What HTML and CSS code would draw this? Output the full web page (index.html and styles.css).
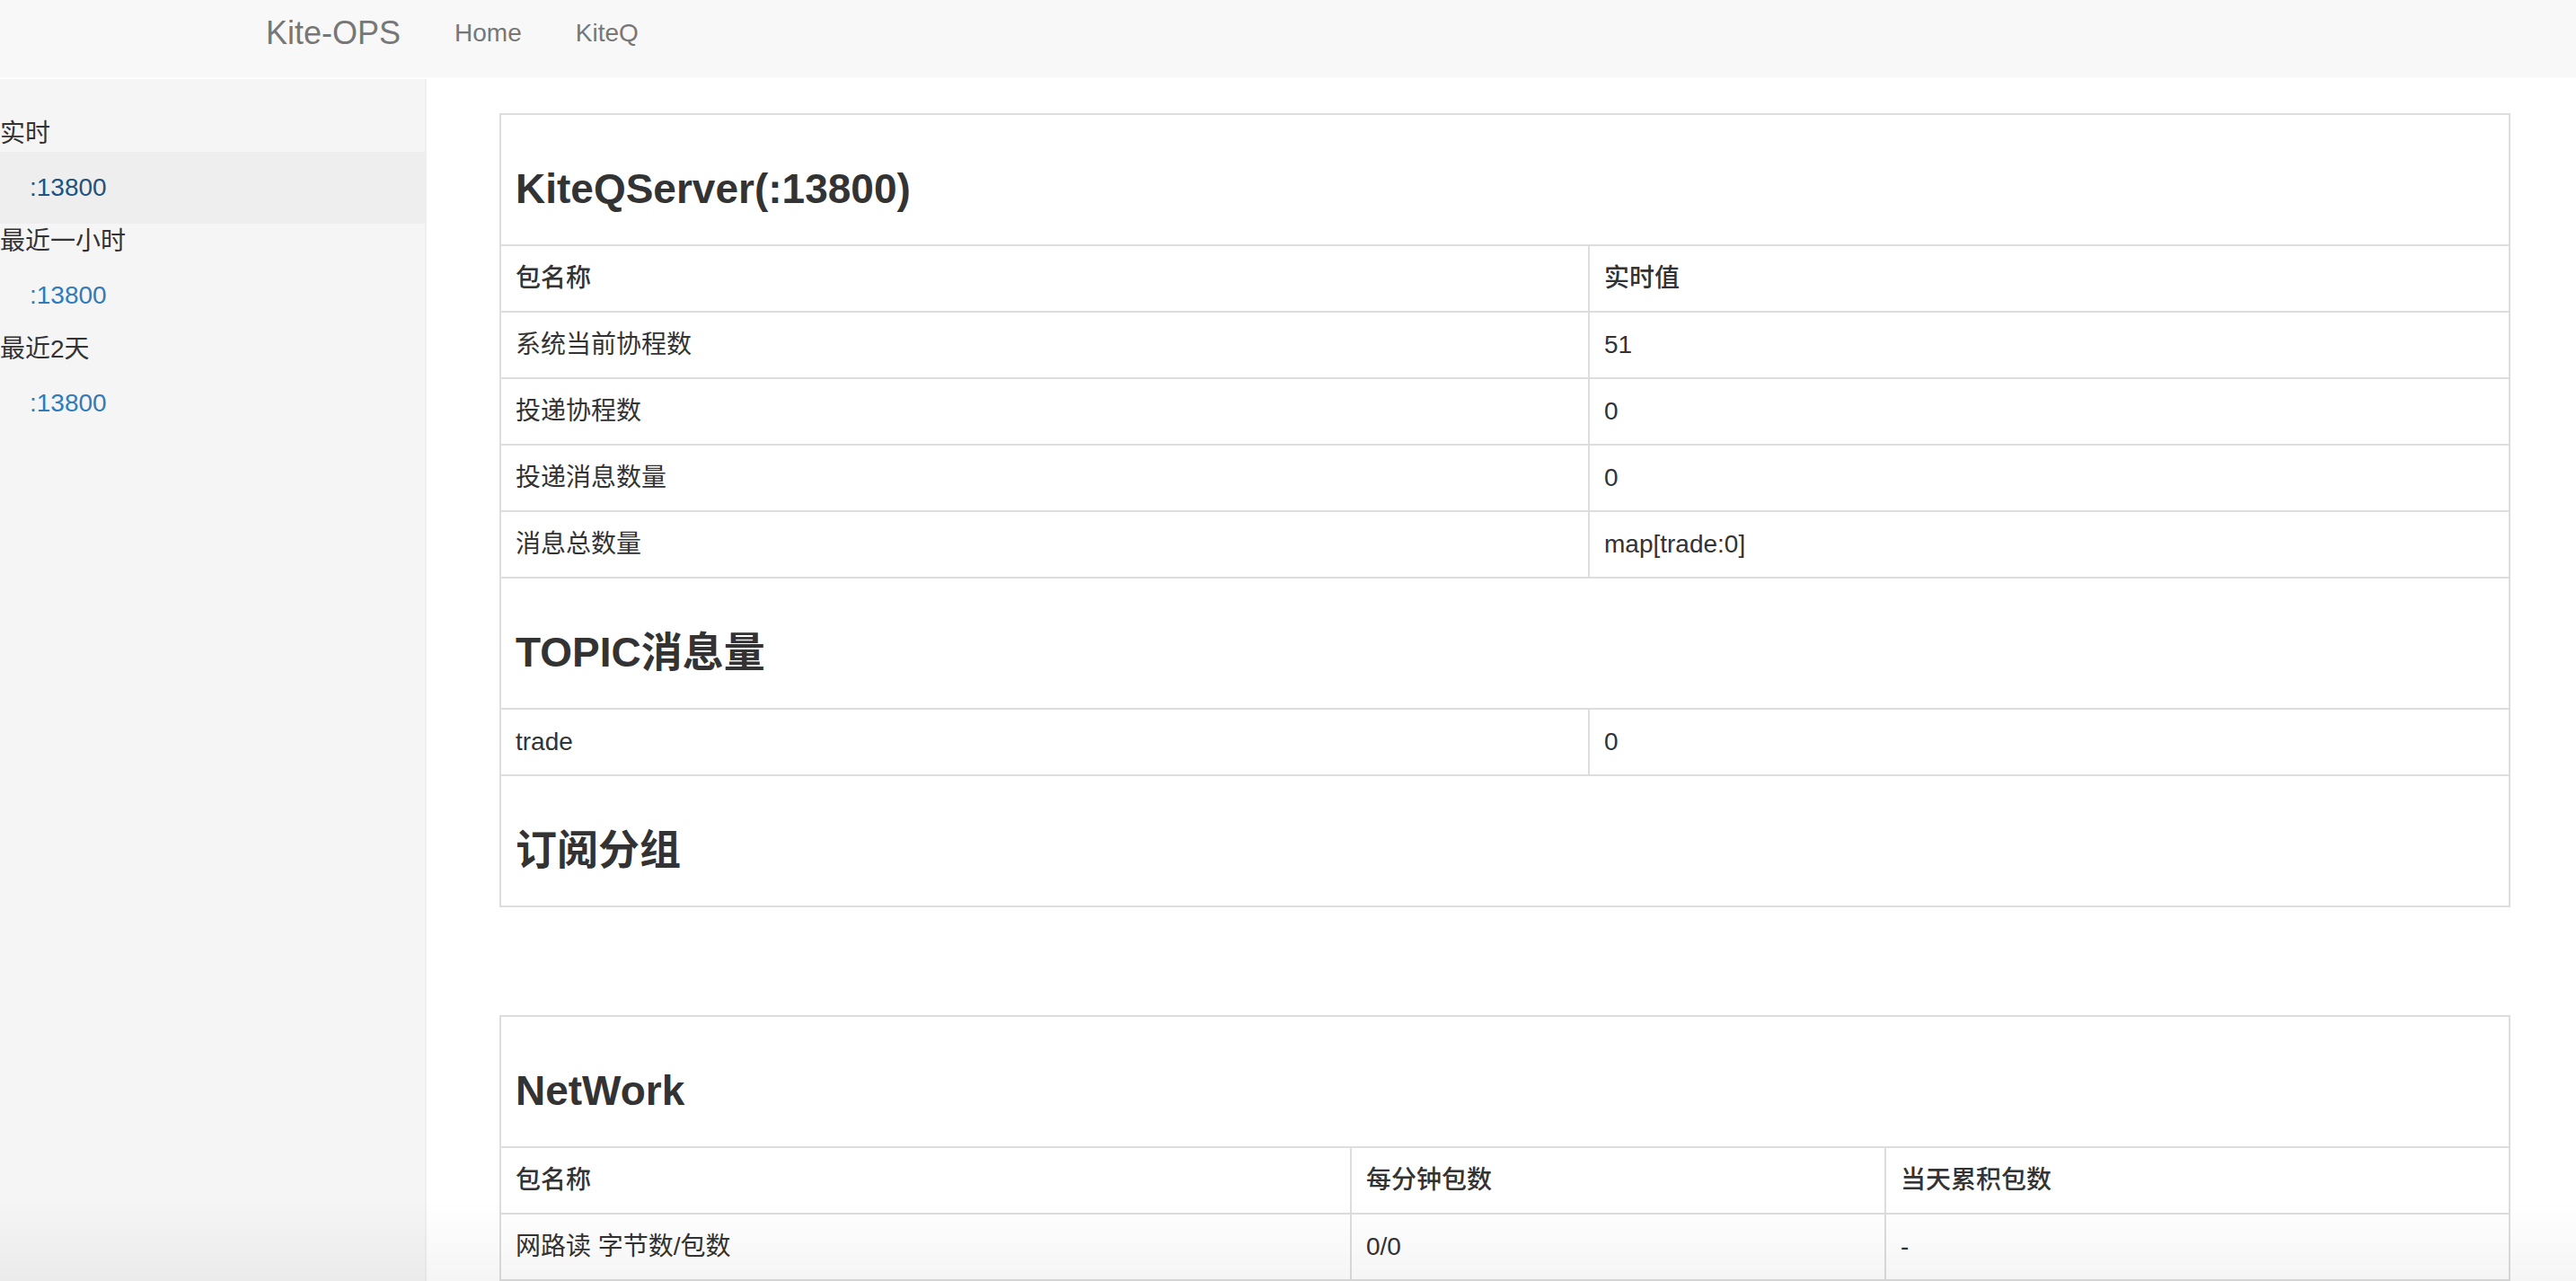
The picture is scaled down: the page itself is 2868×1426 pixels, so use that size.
FILE: index.html
```html
<!DOCTYPE html>
<html lang="zh-CN">
<head>
<meta charset="utf-8">
<title>Kite-OPS</title>
<link rel="stylesheet" href="styles.css">
</head>
<body>
<header class="navbar">
  <a class="brand" href="#">Kite-OPS</a>
  <nav class="nav-links">
    <a href="#">Home</a>
    <a href="#">KiteQ</a>
  </nav>
</header>
<div class="layout">
  <aside class="sidebar">
    <ul class="side-nav">
      <li class="side-header">实时</li>
      <li class="side-item active"><a href="#">:13800</a></li>
      <li class="side-header">最近一小时</li>
      <li class="side-item"><a href="#">:13800</a></li>
      <li class="side-header">最近2天</li>
      <li class="side-item"><a href="#">:13800</a></li>
    </ul>
  </aside>
  <main class="main">
    <table class="stats stats-server">
      <colgroup><col class="col-server-name"><col></colgroup>
      <tbody>
        <tr><td colspan="2" class="caption-cell"><h3>KiteQServer(:13800)</h3></td></tr>
        <tr><th>包名称</th><th>实时值</th></tr>
        <tr><td>系统当前协程数</td><td>51</td></tr>
        <tr><td>投递协程数</td><td>0</td></tr>
        <tr><td>投递消息数量</td><td>0</td></tr>
        <tr><td>消息总数量</td><td>map[trade:0]</td></tr>
        <tr><td colspan="2" class="caption-cell"><h3>TOPIC消息量</h3></td></tr>
        <tr><td>trade</td><td>0</td></tr>
        <tr><td colspan="2" class="caption-cell"><h3>订阅分组</h3></td></tr>
      </tbody>
    </table>
    <table class="stats stats-network">
      <colgroup><col class="col-net-name"><col class="col-net-min"><col></colgroup>
      <tbody>
        <tr><td colspan="3" class="caption-cell"><h3>NetWork</h3></td></tr>
        <tr><th>包名称</th><th>每分钟包数</th><th>当天累积包数</th></tr>
        <tr><td>网路读 字节数/包数</td><td>0/0</td><td>-</td></tr>
      </tbody>
    </table>
  </main>
</div>
<div class="vignette"></div>
</body>
</html>
```
FILE: styles.css
```css
html, body {
  margin: 0;
  padding: 0;
  background: #fff;
}
body {
  font-family: "Liberation Sans", "Noto Sans CJK SC", sans-serif;
  font-size: 28px;
  line-height: 40px;
  color: #333;
  height: 1426px;
  overflow: hidden;
}
a { text-decoration: none; }

.navbar {
  box-sizing: border-box;
  height: 86px;
  background: #f8f8f8;
  display: flex;
  align-items: flex-start;
  padding: 17px 0 0 266px;
}
.brand {
  font-size: 36px;
  line-height: 40px;
  color: #777;
  padding: 0 30px;
}
.nav-links { display: flex; }
.nav-links a {
  font-size: 28px;
  line-height: 40px;
  color: #777;
  padding: 0 30px;
}

.layout {
  display: flex;
  margin-top: 2px;
  height: 1338px;
}
.sidebar {
  width: 473px;
  flex: none;
  background: #f5f5f5;
  border-right: 2px solid #eee;
  padding-top: 41px;
}
.side-nav {
  list-style: none;
  margin: 0;
  padding: 0;
}
.side-header { line-height: 40px; }
.side-item a {
  display: block;
  padding: 20px 30px 20px 33px;
  color: #337ab7;
}
.side-item.active a {
  background: #eee;
  color: #23527c;
}

.main {
  flex: 1;
  padding: 38px 73px 0 81px;
}
.stats {
  width: 100%;
  border-collapse: collapse;
  table-layout: fixed;
}
.stats td, .stats th {
  border: 2px solid #ddd;
  padding: 16px;
  text-align: left;
  vertical-align: top;
  font-weight: normal;
}
.stats th { font-weight: 500; }
.col-server-name { width: 1212px; }
.col-net-name { width: 947px; }
.col-net-min { width: 595px; }
.caption-cell h3 {
  margin: 40px 0 20px;
  font-size: 46px;
  line-height: 52px;
  font-weight: 700;
  color: #333;
}
.stats-network { margin-top: 120px; }

.vignette {
  position: fixed;
  left: 0;
  right: 0;
  bottom: 0;
  height: 90px;
  background: linear-gradient(to bottom, rgba(0,0,0,0), rgba(0,0,0,0.04));
  pointer-events: none;
}
```
